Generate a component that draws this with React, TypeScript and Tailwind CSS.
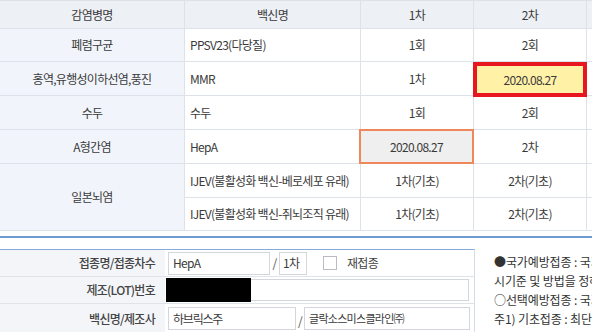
import React from "react";

const cellBase =
  "flex items-center border-r border-b border-[#dde2ea] whitespace-nowrap";
const head = `${cellBase} justify-center bg-[#edf0f5]`;
const c1 = `${cellBase} justify-center bg-[#f1f5fb]`;
const c2 = `${cellBase} justify-start pl-[5px] bg-white`;
const cc = `${cellBase} justify-center bg-white`;
const c5 = `${cellBase} bg-white`;

export default function App() {
  return (
    <div className="w-[592px] h-[332px] overflow-hidden bg-white text-[#3a3a3a] font-['Noto_Sans_CJK_KR','Noto_Sans',sans-serif] text-[12px] tracking-[-0.06em]">
      <div className="w-[600px] grid grid-cols-[185px_176px_113px_113px_13px] grid-rows-[28px_33px_34px_34px_34px_34px_33px] border-t border-[#dde2ea]">
        {/* header */}
        <div className={head}>감염병명</div>
        <div className={head}>백신명</div>
        <div className={head}>1차</div>
        <div className={head}>2차</div>
        <div className={head}></div>

        {/* row 1 */}
        <div className={c1}>폐렴구균</div>
        <div className={c2}>PPSV23(다당질)</div>
        <div className={cc}>1회</div>
        <div className={cc}>2회</div>
        <div className={c5}></div>

        {/* row 2 */}
        <div className={c1}>홍역,유행성이하선염,풍진</div>
        <div className={c2}>MMR</div>
        <div className={cc}>1차</div>
        <div className={`${cc} relative`}>
          <div className="absolute -left-px -right-px top-0 -bottom-[2px] border-[4px] border-[#e8161f] bg-[#fff1a6] flex items-center justify-center">
            2020.08.27
          </div>
        </div>
        <div className={c5}></div>

        {/* row 3 */}
        <div className={c1}>수두</div>
        <div className={c2}>수두</div>
        <div className={cc}>1회</div>
        <div className={cc}>2회</div>
        <div className={c5}></div>

        {/* row 4 */}
        <div className={c1}>A형간염</div>
        <div className={c2}>HepA</div>
        <div className={`${cc} relative`}>
          <div className="absolute -left-[2px] -right-px -top-px -bottom-px border-[2px] border-[#f0875a] bg-[#efefef] flex items-center justify-center">
            2020.08.27
          </div>
        </div>
        <div className={cc}>2차</div>
        <div className={c5}></div>

        {/* rows 5-6 */}
        <div className={`${c1} row-span-2`}>일본뇌염</div>
        <div className={c2}>IJEV(불활성화 백신-베로세포 유래)</div>
        <div className={cc}>1차(기초)</div>
        <div className={cc}>2차(기초)</div>
        <div className={c5}></div>
        <div className={c2}>IJEV(불활성화 백신-쥐뇌조직 유래)</div>
        <div className={cc}>1차(기초)</div>
        <div className={cc}>2차(기초)</div>
        <div className={c5}></div>
      </div>

      {/* bottom section */}
      <div className="mt-[5px] border-t-2 border-[#6f9bd2] pt-[11px] w-[600px] flex">
        <div className="w-[475px] shrink-0 border-t border-r border-t-[#86abd9] border-r-[#d6dce5]">
          {/* row 1 */}
          <div className="flex h-[27px] border-b border-[#dfe3ea]">
            <div className="w-[165px] shrink-0 bg-[#f3f5f9] flex items-center justify-end pr-[10px] font-medium text-[#444]">
              접종명/접종차수
            </div>
            <div className="flex items-center pl-[3px]">
              <div className="w-[102px] h-[23px] border border-[#d3d7dd] bg-white flex items-center px-[4px]">
                HepA
              </div>
              <span className="w-[9px] text-center text-[#555]">/</span>
              <div className="w-[28px] h-[23px] border border-[#d3d7dd] bg-white flex items-center pl-[3px] overflow-hidden whitespace-nowrap">
                1차
              </div>
              <div className="ml-[16px] w-[14px] h-[14px] border border-[#b9bcc2] bg-white" />
              <span className="ml-[10px] text-[#444]">재접종</span>
            </div>
          </div>
          {/* row 2 */}
          <div className="flex h-[27px] border-b border-[#dfe3ea]">
            <div className="w-[165px] shrink-0 bg-[#f3f5f9] flex items-center justify-end pr-[10px] font-medium text-[#444]">
              제조(LOT)번호
            </div>
            <div className="relative flex items-center pl-[3px]">
              <div className="w-[301px] h-[22px] border border-[#d3d7dd] bg-white" />
              <div className="absolute left-px top-px w-[85px] h-[24px] bg-black" />
            </div>
          </div>
          {/* row 3 */}
          <div className="flex h-[29px]">
            <div className="w-[165px] shrink-0 bg-[#f3f5f9] flex items-center justify-end pr-[10px] font-medium text-[#444]">
              백신명/제조사
            </div>
            <div className="flex items-start pt-[3px] pl-[3px] text-[11px]">
              <div className="w-[128px] h-[23px] border border-[#d3d7dd] bg-white flex items-center px-[4px] text-[12px] tracking-[-0.1em]">
                하브릭스주
              </div>
              <span className="w-[8px] text-center text-[#555] text-[12px] mt-[5px]">/</span>
              <div className="w-[166px] h-[23px] border border-[#d3d7dd] bg-white flex items-center px-[4px] whitespace-nowrap">
                글락소스미스클라인㈜
              </div>
            </div>
          </div>
        </div>
        <div className="pl-[19px] pt-[3px] leading-[19px] text-[#333] whitespace-nowrap tracking-[-0.01em]">
          <div>●국가예방접종 : 국가가 감염병의 예방 및 관리에 관한 법률을 통해 실</div>
          <div>시기준 및 방법을 정하여 국민에게 권장하는 예방접종</div>
          <div>○선택예방접종 : 국가예방접종 이외 민간 의료기관에서 접종</div>
          <div>주1) 기초접종 : 최단기간 내에 방어면역 형성을 위한 접종</div>
          <div>주2) 추가접종 : 기초접종 후 방어면역 유지를 위한 접종</div>
        </div>
      </div>
    </div>
  );
}
